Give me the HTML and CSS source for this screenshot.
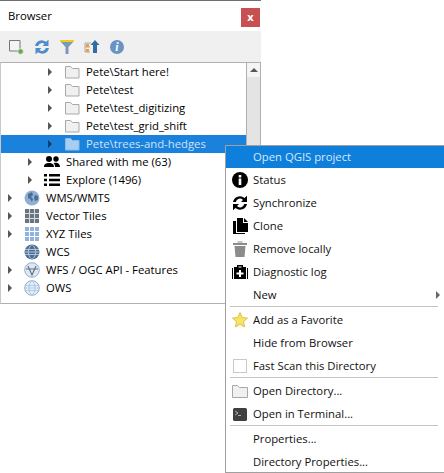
FILE: index.html
```html
<!DOCTYPE html>
<html lang="en">
<head>
    <meta charset="UTF-8">
    <title>Browser</title>
    <link rel="stylesheet" href="styles.css">
</head>
<body>
    <div class="panel">
        <div class="title-bar">
            <span class="title">Browser</span>
            <button class="close">x</button>
        </div>
        <div class="toolbar">
            <svg width="16" height="16" viewBox="0 0 16 16"><path d="M.5 1.500h10.500v10.500H.5z" fill="#f4f4f4" stroke="#777"/><circle cx="11.500" cy="12.500" r="2.800" fill="#6aa84f" stroke="#dcebd2"/></svg>
            <svg width="16" height="16" viewBox="0 0 16 16"><path d="M1 7a7 7 0 0 1 11-4.300L14.500 .8V7H8.500l2-2a4 4 0 0 0-6.300 2zM15 9a7 7 0 0 1-11 4.300L1.500 15.200V9h6l-2 2a4 4 0 0 0 6.300-2z" fill="#4f8ccb"/></svg>
            <svg width="16" height="16" viewBox="0 0 16 16"><path d="M1 2h14L9.500 8v7h-3V8z" fill="#7c99b5"/><path d="M1 1h14v2H1z" fill="#f2c926"/></svg>
            <svg width="16" height="16" viewBox="0 0 16 16"><path d="M1 4h6M1 4v9h5M1 8h5" fill="none" stroke="#a9a9a9"/><path d="M2 5h3v3H2zM2 10h3v3H2z" fill="#f0a030"/><path d="M11 1l4.500 5H13v8H9V6H6.500z" fill="#2f6ea5"/></svg>
            <svg width="16" height="16" viewBox="0 0 16 16"><circle cx="8" cy="8" r="7" fill="#6a93c4"/><text x="8" y="12" class="info-i">i</text></svg>
        </div>
        <div class="tree-box">
            <div class="tree">
                <div class="row lvl2"><i class="arrow"></i><svg width="16" height="16" viewBox="0 0 16 16"><path d="M1.500 2.500h5l2 2h6.500v9.500H1.500z" fill="#f0f0f0" stroke="#a8a8a8"/></svg><span>Pete\Start here!</span></div>
                <div class="row lvl2"><i class="arrow"></i><svg width="16" height="16" viewBox="0 0 16 16"><path d="M1.500 2.500h5l2 2h6.500v9.500H1.500z" fill="#f0f0f0" stroke="#a8a8a8"/></svg><span>Pete\test</span></div>
                <div class="row lvl2"><i class="arrow"></i><svg width="16" height="16" viewBox="0 0 16 16"><path d="M1.500 2.500h5l2 2h6.500v9.500H1.500z" fill="#f0f0f0" stroke="#a8a8a8"/></svg><span>Pete\test_digitizing</span></div>
                <div class="row lvl2"><i class="arrow"></i><svg width="16" height="16" viewBox="0 0 16 16"><path d="M1.500 2.500h5l2 2h6.500v9.500H1.500z" fill="#f0f0f0" stroke="#a8a8a8"/></svg><span>Pete\test_grid_shift</span></div>
                <div class="row lvl2 selected"><i class="arrow"></i><svg width="16" height="16" viewBox="0 0 16 16"><path d="M1.500 2.500h5l2 2h6.500v9.500H1.500z" fill="#a9cdf0" stroke="#8dbbe8"/></svg><span>Pete\trees-and-hedges</span></div>
                <div class="row lvl1"><i class="arrow"></i><svg width="16" height="16" viewBox="0 0 16 16"><circle cx="5" cy="5" r="3"/><circle cx="12" cy="5" r="2.700"/><path d="M0 13c0-3 2-4 5-4s5 1 5 4zM11 13c0-2-.5-3-1.500-4 3-.8 6.500 0 6.500 4z"/></svg><span>Shared with me (63)</span></div>
                <div class="row lvl1"><i class="arrow"></i><svg width="16" height="16" viewBox="0 0 16 16"><path d="M0 2h3v2.500H0zM5 2h11v2.500H5zM0 6.800h3v2.500H0zM5 6.800h11v2.500H5zM0 11.500h3V14H0zM5 11.500h11V14H5z"/></svg><span>Explore (1496)</span></div>
                <div class="row"><i class="arrow"></i><svg width="16" height="16" viewBox="0 0 16 16"><circle cx="8" cy="8" r="7.500" fill="#8fb0d4"/><path d="M4 4l4-2 1 3-2 2 2 2-1 3-2-3-2-1zM11 5l3 1v4l-3 1-1-3z" fill="#4d6f94"/></svg><span>WMS/WMTS</span></div>
                <div class="row"><i class="arrow"></i><svg width="16" height="16" viewBox="0 0 16 16"><path d="M1 1h14v14H1z" fill="#6b7580"/><path d="M5.500 1v14M10.500 1v14M1 5.500h14M1 10.500h14" stroke="#d8dde2"/></svg><span>Vector Tiles</span></div>
                <div class="row"><i class="arrow"></i><svg width="16" height="16" viewBox="0 0 16 16"><path d="M1 1h14v14H1z" fill="#8fb3dc"/><path d="M5.500 1v14M10.500 1v14M1 5.500h14M1 10.500h14" stroke="#fff"/></svg><span>XYZ Tiles</span></div>
                <div class="row no-kids"><svg width="16" height="16" viewBox="0 0 16 16"><circle cx="8" cy="8" r="7.500" fill="#4d6f94"/><path d="M1 5.500h14M.5 8h15M1 10.500h14M8 .5c-5 4-5 11 0 15M8 .5c5 4 5 11 0 15" fill="none" stroke="#c5d6e8" stroke-width=".8"/></svg><span>WCS</span></div>
                <div class="row"><i class="arrow"></i><svg width="16" height="16" viewBox="0 0 16 16"><circle cx="8" cy="8" r="7.300" fill="#dce8f4" stroke="#8fb0d4"/><path d="M4 4l4 9 4-9M2 7h12" fill="none" stroke="#6b7580" stroke-width="1.200"/></svg><span>WFS / OGC API - Features</span></div>
                <div class="row"><i class="arrow"></i><svg width="16" height="16" viewBox="0 0 16 16"><circle cx="8" cy="8" r="7.300" fill="#e6eff8" stroke="#8fb0d4"/><path d="M1 5.500h14M.5 8h15M1 10.500h14M8 .5c-4 4-4 11 0 15M8 .5c4 4 4 11 0 15" fill="none" stroke="#a5c2df" stroke-width=".8"/></svg><span>OWS</span></div>
            </div>
            <div class="scrollbar">
                <div class="scroll-btn"><i class="up"></i></div>
            </div>
        </div>
    </div>

    <div class="menu">
        <div class="item active"><span class="mi"></span>Open QGIS project</div>
        <div class="item"><span class="mi"><svg width="16" height="16" viewBox="0 0 16 16"><circle cx="8" cy="8" r="8"/><path d="M6.700 3h2.600v2.400H6.700zM6.700 6.600h2.600V13H6.700z" fill="#fff"/></svg></span>Status</div>
        <div class="item"><span class="mi"><svg width="16" height="16" viewBox="0 0 16 16"><path d="M1 7a7 7 0 0 1 11.500-4L15 .8V7H9l2-2a4.200 4.200 0 0 0-7.200 2zM15 9a7 7 0 0 1-11.500 4L1 15.200V9h6l-2 2a4.200 4.200 0 0 0 7.200-2z"/></svg></span>Synchronize</div>
        <div class="item"><span class="mi"><svg width="16" height="16" viewBox="0 0 16 16"><path d="M5 0h6v5h5v9H5z"/><path d="M12 0l4 4h-4zM1 3h3v12h9v1H1z"/></svg></span>Clone</div>
        <div class="item"><span class="mi"><svg width="16" height="16" viewBox="0 0 16 16"><path d="M1 2h14v2H1zM5.500 .5h5v1h-5zM2.500 5h11l-1 11h-9z" fill="#8c8c8c"/></svg></span>Remove locally</div>
        <div class="item"><span class="mi"><svg width="16" height="16" viewBox="0 0 16 16"><path d="M5 3V1h6v2h3v12H2V3zM6.500 2.500v1h3v-1zM0 4h1v11H0zM15 4h1v11h-1z"/><path d="M7 6h2v2.500h2.500v2H9V13H7v-2.500H4.500v-2H7z" fill="#fff"/></svg></span>Diagnostic log</div>
        <div class="item"><span class="mi"></span>New<i class="sub-arrow"></i></div>
        <div class="sep"></div>
        <div class="item"><span class="mi"><svg width="16" height="16" viewBox="0 0 16 16"><path d="M8 .5l2.300 5 5.200.6-3.900 3.500 1.100 5.400L8 12.300 3.300 15l1.100-5.400L.5 6.100l5.200-.6z" fill="#f7e463" stroke="#d2b53a" stroke-width=".8"/></svg></span>Add as a Favorite</div>
        <div class="item"><span class="mi"></span>Hide from Browser</div>
        <div class="item"><span class="mi"><i class="check"></i></span>Fast Scan this Directory</div>
        <div class="sep"></div>
        <div class="item"><span class="mi"><svg width="16" height="16" viewBox="0 0 16 16"><path d="M.5 2.500h5l2 2h8v10H.5z" fill="#f0f0f0" stroke="#a8a8a8"/></svg></span>Open Directory...</div>
        <div class="item"><span class="mi"><svg width="16" height="16" viewBox="0 0 16 16"><rect x="1" y="2" width="14" height="13" rx="1.500" fill="#3f3f3f"/><path d="M3 5l3 2-3 2M6 9.500h3" fill="none" stroke="#ccc" stroke-width=".8"/></svg></span>Open in Terminal...</div>
        <div class="sep"></div>
        <div class="item"><span class="mi"></span>Properties...</div>
        <div class="item last"><span class="mi"></span>Directory Properties...</div>
    </div>
</body>
</html>
```

FILE: styles.css
```css
* {
    box-sizing: border-box;
}
html, body {
    height: 473px;
    overflow: hidden;
}
body {
    margin: 0;
    position: relative;
    background-color: white;
    color: #000;
    font-family: "Open Sans", "Noto Sans", sans-serif;
    font-size: 11.3px;
}
.panel {
    width: 261px;
    border-top: 1px solid #6e6e6e;
}
.title-bar {
    display: flex;
    justify-content: space-between;
    align-items: center;
    height: 30px;
    padding: 3px 1px 0 8px;
}
.title {
    margin-bottom: 5px;
}
.close {
    width: 19px;
    height: 19px;
    padding: 0 0 2px;
    border: none;
    background-color: #c75050;
    color: white;
    font-family: "Open Sans", sans-serif;
    font-size: 11px;
    font-weight: bold;
}
.toolbar {
    display: flex;
    align-items: center;
    gap: 9px;
    height: 31px;
    padding-left: 9px;
    background-color: #f0f0f0;
}
.info-i {
    font-family: "Liberation Serif", serif;
    font-size: 12px;
    font-style: italic;
    font-weight: bold;
    fill: white;
    text-anchor: middle;
}
.tree-box {
    display: flex;
    height: 242px;
    border: 1px solid #b0b0b0;
    border-left-color: #c8c8c8;
}
.tree {
    flex: 1;
}
.row {
    display: flex;
    align-items: center;
    height: 18px;
    padding-left: 7px;
}
.row svg {
    flex: none;
}
.row span {
    margin-left: 5px;
    padding: 0 1px 1px;
}
.lvl1 {
    padding-left: 27px;
}
.lvl2 {
    padding-left: 47px;
}
.no-kids {
    padding-left: 23px;
}
.arrow {
    width: 0;
    height: 0;
    margin-right: 12px;
    border-left: 4px solid #555;
    border-top: 4px solid transparent;
    border-bottom: 4px solid transparent;
}
.selected {
    background-color: #1a81dc;
    color: #cfe4f7;
}
.selected .arrow {
    border-left-color: #0d3a66;
}
.scrollbar {
    width: 14px;
    border-left: 1px solid #b0b0b0;
    background-color: #e4e4e4;
}
.scroll-btn {
    display: flex;
    justify-content: center;
    align-items: center;
    height: 14px;
    background-color: #f4f4f4;
}
.up {
    width: 0;
    height: 0;
    border-bottom: 4px solid #555;
    border-left: 4px solid transparent;
    border-right: 4px solid transparent;
}
.menu {
    position: absolute;
    left: 225px;
    top: 145px;
    width: 219px;
    height: 328px;
    border: 1px solid #a0a0a0;
    border-right: none;
    background-color: white;
}
.item {
    display: flex;
    align-items: center;
    height: 23px;
    padding: 0 0 2px 6px;
    color: #111;
}
.mi {
    display: flex;
    justify-content: center;
    align-items: center;
    width: 16px;
    height: 16px;
    margin-right: 5px;
}
.item.active {
    height: 22px;
    margin-bottom: 1px;
    padding-bottom: 1px;
    background-color: #0f7fdc;
    color: #d6e9fa;
}
.item.last {
    height: 21px;
    padding-bottom: 1px;
}
.sep {
    height: 1px;
    margin: -1px 6px 2px 4px;
    background-color: #c4c4c4;
}
.sub-arrow {
    width: 0;
    height: 0;
    margin-left: auto;
    margin-right: 4px;
    border-left: 4px solid #666;
    border-top: 4px solid transparent;
    border-bottom: 4px solid transparent;
}
.check {
    width: 14px;
    height: 14px;
    border: 1px solid #c8c8c8;
}
```
